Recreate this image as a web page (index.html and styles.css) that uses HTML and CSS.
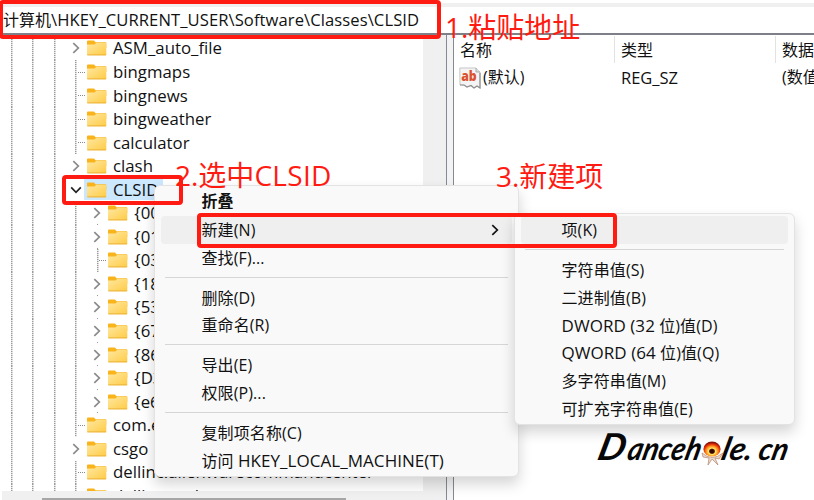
FILE: index.html
```html
<!DOCTYPE html>
<html lang="zh-CN">
<head>
<meta charset="utf-8">
<title>注册表编辑器</title>
<link rel="stylesheet" href="styles.css">
</head>
<body>
<svg class="defs" width="0" height="0">
  <defs>
    <linearGradient id="fold" x1="0" y1="0" x2="1" y2="1"><stop offset="0" stop-color="#ffe8a2"/><stop offset="1" stop-color="#ffcb45"/></linearGradient>
    <radialGradient id="eyeFill" cx=".5" cy=".65" r=".6"><stop offset="0" stop-color="#2a0500"/><stop offset=".22" stop-color="#450500"/><stop offset=".34" stop-color="#ffe766"/><stop offset=".58" stop-color="#ff8b18"/><stop offset=".8" stop-color="#df2607"/><stop offset="1" stop-color="#7b1208"/></radialGradient>
    <symbol id="folder" viewBox="0 0 20 16"><path d="M0 1.4Q0 .5 1 .5H7L8.5 2.2H18.6Q19.3 2.2 19.3 3V8H0Z" fill="#f9b41b"/><path d="M0 4.6H7.5L9.3 2.8H19.3V14.5Q19.3 15.3 18.6 15.3H.8Q0 15.3 0 14.5Z" fill="url(#fold)"/><path d="M.3 14.9H19.1" stroke="#e9ae32" stroke-width=".9"/></symbol>
    <symbol id="chev" viewBox="0 0 8 12"><path d="M1.3 1.2L6.3 6L1.3 10.8" fill="none" stroke="currentColor" stroke-width="1.7"/></symbol>
  </defs>
</svg>
<div class="window">
  <div class="strip"></div>
  <div class="address"><span class="cn">计算机</span><span class="path">\HKEY_CURRENT_USER\Software\Classes\CLSID</span></div>
  <div class="body">
    <div class="left">
      <div class="tree" id="tree"></div>
      <div class="hscroll"><div class="thumb"></div></div>
    </div>
    <div class="vscroll"></div>
    <div class="splitter"></div>
    <div class="list">
      <div class="head"><span class="c1">名称</span><span class="c2">类型</span><span class="c3">数据</span></div>
      <div class="record">
        <span class="c1"><svg width="22" height="22" viewBox="0 0 22 22"><path d="M.8 1H17L21 5V21L18 19L15 21L12 18.5L8 20L5 18L1 18Z" fill="#f4f4f4" stroke="#c5c5c5"/><path d="M17 1V5H21" fill="#ddd" stroke="#aaa"/><path d="M1 18L5 18L8 20L12 18.5L15 21L18 19L21 21V6" fill="none" stroke="#8f8f8f" stroke-width="1.2"/><text x="2.2" y="14" class="ab" textLength="15.5" lengthAdjust="spacingAndGlyphs">ab</text></svg><span>(默认)</span></span>
        <span class="c2">REG_SZ</span><span class="c3">(数值未设置)</span>
      </div>
    </div>
  </div>

  <div class="menu main">
    <div class="item bold">折叠</div>
    <div class="item active"><span>新建(N)</span><svg width="8" height="12"><use href="#chev"/></svg></div>
    <div class="item">查找(F)...</div>
    <hr>
    <div class="item">删除(D)</div>
    <div class="item">重命名(R)</div>
    <hr>
    <div class="item">导出(E)</div>
    <div class="item">权限(P)...</div>
    <hr>
    <div class="item">复制项名称(C)</div>
    <div class="item">访问 <span class="wide">HKEY_LOCAL_MACHINE(T)</span></div>
  </div>
  <div class="menu sub">
    <div class="item active">项(K)</div>
    <hr>
    <div class="item">字符串值(S)</div>
    <div class="item">二进制值(B)</div>
    <div class="item"><span class="wide">DWORD (32</span> 位)值(D)</div>
    <div class="item"><span class="wide">QWORD (64</span> 位)值(Q)</div>
    <div class="item">多字符串值(M)</div>
    <div class="item">可扩充字符串值(E)</div>
  </div>

  <div class="box box1"></div>
  <div class="box box2"></div>
  <div class="box box3"></div>
  <div class="note note1">1.粘贴地址</div>
  <div class="note note2">2.选中<span class="clsid">CLSID</span></div>
  <div class="note note3">3.新建项</div>

  <svg class="logo" width="210" height="46" viewBox="0 0 210 46">
    <g class="script" transform="translate(0 32) skewX(-14)">
      <text x="4" y="0" font-size="37" textLength="27" lengthAdjust="spacingAndGlyphs">D</text>
      <text x="34" y="0" font-size="32" textLength="73" lengthAdjust="spacingAndGlyphs">anceh</text>
      <text x="128" y="0" font-size="32" textLength="31" lengthAdjust="spacingAndGlyphs">le.</text>
      <text x="165" y="0" font-size="31" textLength="29" lengthAdjust="spacingAndGlyphs">cn</text>
    </g>
    <path d="M110 25Q120 34 131 25L127 31L123 30L126 37L120 31L116 37L117 30L111 29Z" fill="#e9dbd0" stroke="#b9826a" stroke-width=".7"/>
    <ellipse cx="120" cy="21" rx="8.6" ry="7.6" fill="url(#eyeFill)"/>
  </svg>
</div>
<script src="tree.js"></script>
</body>
</html>
```
FILE: tree.js
```js
// [label, depth, state]: c = collapsed, o = open, l = leaf
const rows = [
  ['ASM_auto_file', 0, 'c'], ['bingmaps', 0, 'l'], ['bingnews', 0, 'l'], ['bingweather', 0, 'l'],
  ['calculator', 0, 'l'], ['clash', 0, 'c'], ['CLSID', 0, 'o'],
  ['{00', 1, 'c'], ['{01', 1, 'c'], ['{03', 1, 'l'], ['{18', 1, 'c'], ['{53', 1, 'c'],
  ['{67', 1, 'c'], ['{86', 1, 'c'], ['{D3', 1, 'c'], ['{e6', 1, 'c'],
  ['com.epic', 0, 'l'], ['csgo', 0, 'c'], ['dellinc.alienwarecommandcenter', 0, 'l'], ['dellinc.update', 0, 'l']
];
document.getElementById('tree').innerHTML = rows.map(([label, depth, state]) => {
  const guides = '<i class="guide"></i>'.repeat(3 + depth);
  const chev = state === 'l' ? '' : '<svg width="8" height="12"><use href="#chev"/></svg>';
  return `<div class="row ${state === 'o' ? 'open' : ''}">${guides}<i class="node ${state}">${chev}</i>` +
    `<span class="key"><svg width="20" height="16"><use href="#folder"/></svg><span>${label}</span></span></div>`;
}).join('');
```
FILE: styles.css
```css
* { box-sizing: border-box; }
body { margin: 0; font: 16px/20px "Open Sans", "Noto Sans CJK SC", sans-serif; color: #111; }
.defs { position: absolute; }
.window { position: relative; width: 814px; height: 500px; overflow: hidden; background: #fff; display: flex; flex-direction: column; }
.strip { height: 4px; margin-top: 3px; background: #f0f0f0; flex: none; }
.address { height: 28px; flex: none; border-bottom: 2px solid #7d8187; padding-left: 3px; display: flex; align-items: center; white-space: nowrap; }
.path { font-size: 16.6px; letter-spacing: .08px; }
.body { flex: 1; display: flex; min-height: 0; }
.left { width: 423px; display: flex; flex-direction: column; }
.tree { height: 456.5px; padding-top: 1.7px; overflow: hidden; font-size: 16.8px; letter-spacing: .02px; }
.row { height: 23.56px; display: flex; align-items: center; padding-left: 1px; white-space: nowrap; }
.guide, .node { flex: none; align-self: stretch; width: 21.4px; }
.guide, .node { background: repeating-linear-gradient(#9a9a9a 0 1px, #e8e8e8 1px 2px) 10px 0 / 1.5px 100% no-repeat; }
.node { position: relative; display: flex; align-items: center; justify-content: center; color: #8a8a8a; }
.node.c, .node.o { background: none; }
.guide + .guide + .guide + .guide + .node.c { background: linear-gradient(#999, #999) 10px 100% / 1px 1px no-repeat; }
.node.l::after { content: ""; width: 8px; height: 1px; margin-left: 12px; background: repeating-linear-gradient(90deg, #888 0 1px, #fff 1px 2px); }
.node.o { color: #222; }
.node.o svg { transform: rotate(90deg); }
.key { display: flex; align-items: center; height: 21px; gap: 6px; padding: 0 5px 0 0; margin-left: .4px; }
.key svg { flex: none; }
.open .key { background: #cce8ff; margin-left: -2.6px; padding-left: 3px; }
.hscroll { flex: 1; margin-left: 2px; background: #f0f0f0; padding: 7px 0 0 40px; }
.thumb { width: 304px; height: 2px; background: #a6a6a6; }
.vscroll { width: 23px; background: #f0f0f0; flex: none; }
.splitter { width: 8px; flex: none; border: solid #858a92; border-width: 0 1.5px; background: #f3f3f3; }
.list { flex: 1; min-width: 0; white-space: nowrap; overflow: hidden; }
.head, .record { display: flex; }
.head { height: 28px; align-items: center; padding-top: 1px; }
.head .c1, .head .c2 { border-right: 1px solid #e2e2e2; }
.head span, .record > span { flex: none; height: 27px; line-height: 29px; padding-left: 6px; }
.record > span { line-height: 27px; }
.c1 { width: 161px; }
.c2 { width: 161px; }
.record { margin-top: 1px; }
.record > .c2 { font-size: 16.5px; }
.record > .c1 { padding-left: 5px; display: flex; align-items: center; gap: 2px; }
.ab { font: 800 14px "Open Sans", sans-serif; fill: #db5131; }
.menu { position: absolute; background: #f9f9f9; border: 1px solid #e3e3e3; border-radius: 6px; box-shadow: 0 7px 14px rgba(0,0,0,.17); white-space: nowrap; }
.main { left: 154px; top: 185px; width: 365px; height: 292px; padding: 2px 6px; }
.sub { left: 514px; top: 213px; width: 281px; height: 212px; padding: 2px 6px; }
.item { height: 27.85px; line-height: 28.2px; padding-left: 40.5px; border-radius: 4px; letter-spacing: .1px; }
.wide { font-size: 17px; letter-spacing: .05px; line-height: 20px; }
.bold { font-weight: 700; line-height: 27px; }
.active { background: #efefef; display: flex; align-items: center; justify-content: space-between; padding-right: 13px; color: #111; }
.menu hr { height: 1px; border: 0; background: #d6d6d6; margin: 5px 4px 6px; }
.box { position: absolute; border: 4px solid #ff1b12; border-radius: 4px; }
.box1 { left: -1px; top: 0; width: 442px; height: 39px; }
.box2 { left: 62px; top: 175px; width: 121px; height: 30px; }
.box3 { left: 197px; top: 213px; width: 420px; height: 35px; }
.note { position: absolute; font: 400 28px/34px "Open Sans", "Noto Sans CJK SC", sans-serif; color: #ff1b12; white-space: nowrap; }
.clsid { letter-spacing: .3px; }
.note1 { left: 445px; top: 10px; }
.note2 { left: 175px; top: 158px; }
.note3 { left: 496px; top: 159px; }
.logo { position: absolute; left: 592px; top: 428px; }
.script { font-family: Lato, sans-serif; font-style: italic; font-weight: 700; fill: #080808; }
```
